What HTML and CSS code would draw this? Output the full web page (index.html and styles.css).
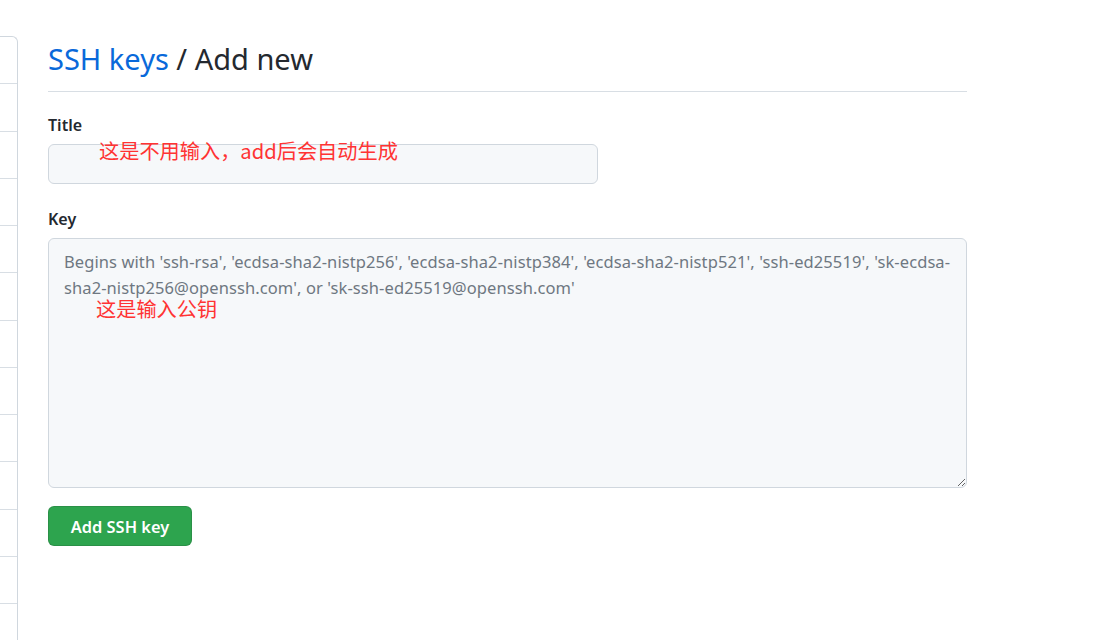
FILE: index.html
```html
<!DOCTYPE html>
<html lang="en">
<head>
<meta charset="utf-8">
<title>SSH keys / Add new</title>
<link rel="stylesheet" href="styles.css">
</head>
<body>
<div class="layout">
  <aside class="sidebar">
    <div class="side-row"></div><div class="side-row"></div><div class="side-row"></div>
    <div class="side-row"></div><div class="side-row"></div><div class="side-row"></div>
    <div class="side-row"></div><div class="side-row"></div><div class="side-row"></div>
    <div class="side-row"></div><div class="side-row"></div><div class="side-row"></div>
    <div class="side-row"></div>
  </aside>
  <main class="main">
    <h2 class="subhead"><a class="crumb" href="#">SSH keys</a> / Add new</h2>
    <form class="form">
      <label class="label" for="title">Title</label>
      <div class="field">
        <input class="input" id="title" type="text">
        <span class="note note-title">这是不用输入，add后会自动生成</span>
      </div>
      <label class="label label-key" for="key">Key</label>
      <div class="field">
        <textarea class="textarea" id="key" placeholder="Begins with 'ssh-rsa', 'ecdsa-sha2-nistp256', 'ecdsa-sha2-nistp384', 'ecdsa-sha2-nistp521', 'ssh-ed25519', 'sk-ecdsa-sha2-nistp256@openssh.com', or 'sk-ssh-ed25519@openssh.com'"></textarea>
        <span class="note note-key">这是输入公钥</span>
      </div>
      <button class="btn" type="button">Add SSH key</button>
    </form>
  </main>
</div>
</body>
</html>
```
FILE: styles.css
```css
* { box-sizing: border-box; }
html, body { margin: 0; padding: 0; background: #ffffff; }
body {
  font-family: "Noto Sans", "Noto Sans CJK SC", sans-serif;
  color: #24292f;
  width: 1118px;
  height: 640px;
  overflow: hidden;
}
.layout {
  display: flex;
  gap: 30px;
  align-items: flex-start;
  height: 640px;
  overflow: hidden;
}
.sidebar {
  width: 18px;
  height: 604px;
  margin-top: 36px;
  overflow: hidden;
  border-top: 1px solid #d0d7de;
  border-right: 1px solid #d0d7de;
  border-top-right-radius: 6px;
  flex-shrink: 0;
}
.side-row {
  height: 47.27px;
  border-bottom: 1px solid #d8dee4;
}
.main {
  width: 919px;
  flex-shrink: 0;
}
.subhead {
  margin: 41px 0 0;
  padding-bottom: 15px;
  border-bottom: 1px solid #d8dee4;
  font-size: 29px;
  line-height: 35px;
  font-weight: 400;
  color: #24292f;
}
.crumb { color: #0969da; text-decoration: none; }
.form {
  display: flex;
  flex-direction: column;
  align-items: flex-start;
  padding-top: 21px;
}
.label {
  font-size: 16px;
  line-height: 24px;
  font-weight: 600;
  margin-bottom: 7px;
}
.label-key { margin-top: 23px; }
.field { position: relative; }
.input {
  display: block;
  width: 550px;
  height: 40px;
  border: 1px solid #d0d7de;
  border-radius: 6px;
  background: #f6f8fa;
  font: inherit;
}
.textarea {
  display: block;
  width: 919px;
  height: 250px;
  padding: 10px 6px 10px 15px;
  border: 1px solid #d0d7de;
  border-radius: 6px;
  background: #f6f8fa;
  font-family: "Noto Sans", sans-serif;
  font-size: 16.5px;
  letter-spacing: 0.09px;
  line-height: 26px;
  color: #24292f;
  resize: vertical;
}
.textarea::placeholder { color: #6e7781; }
.note {
  position: absolute;
  color: #ff3333;
  font-family: "Noto Sans CJK SC", sans-serif;
  font-size: 20.2px;
  line-height: 20px;
  white-space: nowrap;
}
.note-title { left: 51px; top: -3px; }
.note-key { left: 48px; top: 61px; }
.btn {
  margin-top: 18px;
  width: 144px;
  height: 40px;
  border: 1px solid rgba(27, 31, 36, 0.15);
  border-radius: 6px;
  background: #2da44e;
  color: #ffffff;
  font-family: "Noto Sans", sans-serif;
  font-size: 16.4px;
  font-weight: 600;
  padding: 0;
}
```
